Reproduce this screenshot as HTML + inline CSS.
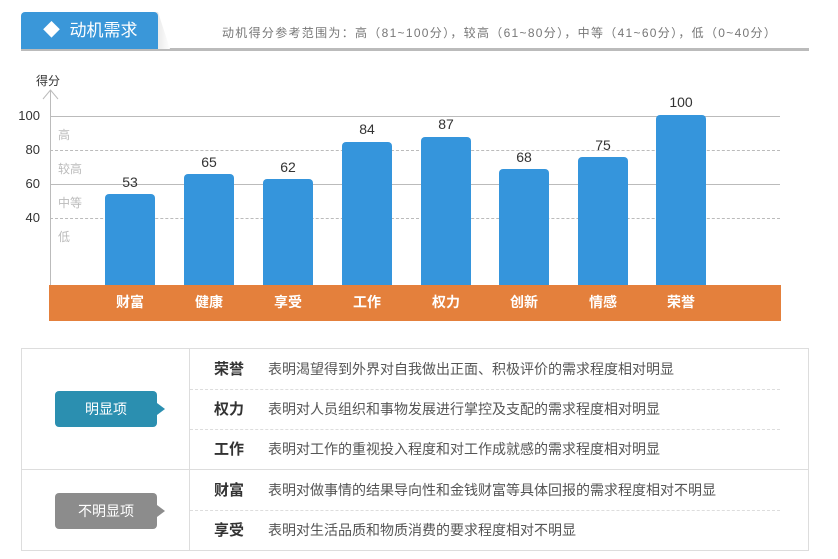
<!DOCTYPE html>
<html><head><meta charset="utf-8"><style>
*{margin:0;padding:0;box-sizing:border-box}
body{width:838px;height:559px;background:#fff;position:relative;overflow:hidden;font-family:"Liberation Sans","Noto Sans CJK SC",sans-serif;color:#333}
.a{position:absolute}
.bar{position:absolute;width:50px;background:#3595dc;border-radius:4px 4px 0 0;bottom:274px}
.v{position:absolute;width:50px;text-align:center;font-size:14px;color:#333}
.lab{position:absolute;top:292px;width:60px;text-align:center;font-size:14px;font-weight:bold;color:#fff}
.yl{position:absolute;left:14px;width:26px;text-align:right;font-size:13px;color:#333}
.zl{position:absolute;left:58px;font-size:12px;color:#bbb}
.row{position:absolute;left:190px;width:590px;height:40px;line-height:40px;font-size:14px;color:#555}
.row b{display:inline-block;width:78px;text-align:center;color:#333;font-size:15px}
</style></head><body>
<div class="a" style="left:21px;top:48px;width:788px;height:3px;background:#bbb"></div>
<div class="a" style="left:150px;top:12px;width:20px;height:37px;background:linear-gradient(90deg,#ddd,#fff);clip-path:polygon(0 0,40% 0,100% 100%,0 100%)"></div>
<div class="a" style="left:21px;top:12px;width:137px;height:37px;background:#3a97d9;border-radius:4px 4px 0 0;color:#fff;font-size:17px;line-height:37px;padding-left:22px">◆&nbsp; 动机需求</div>
<div class="a" style="left:222px;top:24px;font-size:12px;color:#777;letter-spacing:1.3px;white-space:nowrap">动机得分参考范围为：高（81~100分），较高（61~80分），中等（41~60分），低（0~40分）</div>
<div class="a" style="left:36px;top:72px;font-size:12px">得分</div>
<div class="a" style="left:50px;top:90px;width:1px;height:196px;background:#bbb"></div>
<svg class="a" style="left:42px;top:88px" width="18" height="12"><path d="M1 11 L8.5 2 L16 11" stroke="#bbb" fill="none"/></svg>
<div class="a" style="left:50px;top:116px;width:730px;height:1px;background:#bbb"></div>
<div class="a" style="left:50px;top:150px;width:730px;border-top:1px dashed #bbb"></div>
<div class="a" style="left:50px;top:184px;width:730px;height:1px;background:#bbb"></div>
<div class="a" style="left:50px;top:218px;width:730px;border-top:1px dashed #bbb"></div>
<div class="yl" style="top:108px">100</div><div class="yl" style="top:142px">80</div><div class="yl" style="top:176px">60</div><div class="yl" style="top:210px">40</div>
<div class="zl" style="top:126px">高</div><div class="zl" style="top:160px">较高</div><div class="zl" style="top:194px">中等</div><div class="zl" style="top:228px">低</div>
<div class="bar" style="left:105px;height:91px"></div><div class="v" style="left:105px;top:174px">53</div>
<div class="bar" style="left:184px;height:111px"></div><div class="v" style="left:184px;top:154px">65</div>
<div class="bar" style="left:263px;height:106px"></div><div class="v" style="left:263px;top:159px">62</div>
<div class="bar" style="left:342px;height:143px"></div><div class="v" style="left:342px;top:121px">84</div>
<div class="bar" style="left:421px;height:148px"></div><div class="v" style="left:421px;top:116px">87</div>
<div class="bar" style="left:499px;height:116px"></div><div class="v" style="left:499px;top:149px">68</div>
<div class="bar" style="left:578px;height:128px"></div><div class="v" style="left:578px;top:137px">75</div>
<div class="bar" style="left:656px;height:170px"></div><div class="v" style="left:656px;top:94px">100</div>
<div class="a" style="left:49px;top:285px;width:732px;height:36px;background:#e4803c"></div>
<div class="lab" style="left:100px">财富</div><div class="lab" style="left:179px">健康</div><div class="lab" style="left:258px">享受</div><div class="lab" style="left:337px">工作</div><div class="lab" style="left:416px">权力</div><div class="lab" style="left:494px">创新</div><div class="lab" style="left:573px">情感</div><div class="lab" style="left:651px">荣誉</div>
<div class="a" style="left:21px;top:348px;width:788px;height:203px;border:1px solid #ddd"></div>
<div class="a" style="left:189px;top:348px;width:1px;height:203px;background:#ddd"></div>
<div class="a" style="left:21px;top:469px;width:788px;height:1px;background:#ddd"></div>
<div class="a" style="left:190px;top:389px;width:590px;border-top:1px dashed #ddd"></div>
<div class="a" style="left:190px;top:429px;width:590px;border-top:1px dashed #ddd"></div>
<div class="a" style="left:190px;top:510px;width:590px;border-top:1px dashed #ddd"></div>
<div class="a" style="left:55px;top:391px;width:102px;height:36px;background:#2b8fb0;border-radius:4px;color:#fff;font-size:14px;line-height:36px;text-align:center">明显项</div>
<div class="a" style="left:157px;top:403px;border-left:8px solid #2b8fb0;border-top:6px solid transparent;border-bottom:6px solid transparent"></div>
<div class="a" style="left:55px;top:493px;width:102px;height:36px;background:#8c8c8c;border-radius:4px;color:#fff;font-size:14px;line-height:36px;text-align:center">不明显项</div>
<div class="a" style="left:157px;top:505px;border-left:8px solid #8c8c8c;border-top:6px solid transparent;border-bottom:6px solid transparent"></div>
<div class="row" style="top:349px"><b>荣誉</b>表明渴望得到外界对自我做出正面、积极评价的需求程度相对明显</div>
<div class="row" style="top:389px"><b>权力</b>表明对人员组织和事物发展进行掌控及支配的需求程度相对明显</div>
<div class="row" style="top:429px"><b>工作</b>表明对工作的重视投入程度和对工作成就感的需求程度相对明显</div>
<div class="row" style="top:470px"><b>财富</b>表明对做事情的结果导向性和金钱财富等具体回报的需求程度相对不明显</div>
<div class="row" style="top:510px"><b>享受</b>表明对生活品质和物质消费的要求程度相对不明显</div>
</body></html>
